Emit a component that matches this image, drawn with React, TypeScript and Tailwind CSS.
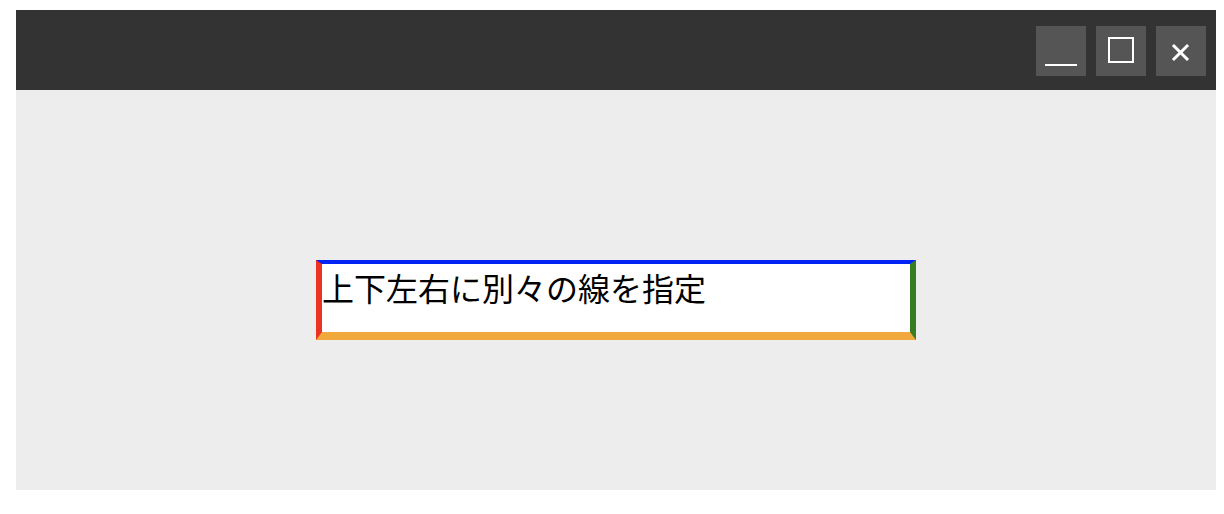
import React from 'react'

// Window title-bar buttons drawn as small SVG glyphs
function MinimizeIcon() {
  return (
    <svg width="50" height="50" viewBox="0 0 50 50">
      <rect x="9" y="38" width="32" height="2" fill="#ffffff" />
    </svg>
  )
}

function MaximizeIcon() {
  return (
    <svg width="50" height="50" viewBox="0 0 50 50">
      <rect x="13" y="12" width="24" height="24" fill="none" stroke="#ffffff" strokeWidth="2" />
    </svg>
  )
}

function CloseIcon() {
  return (
    <svg width="50" height="50" viewBox="0 0 50 50">
      <path d="M18 20 L31 33 M31 20 L18 33" stroke="#ffffff" strokeWidth="3" strokeLinecap="square" />
    </svg>
  )
}

export default function App() {
  return (
    <div className="min-h-[514px] bg-white pt-[10px] pl-4" style={{ fontFamily: '"Noto Sans CJK JP", "Noto Sans", sans-serif' }}>
      <div className="w-[1200px]">
        {/* title bar */}
        <div className="h-20 bg-[#333333] flex items-start justify-end gap-[10px] pt-4 pr-[10px]">
          <div className="w-[50px] h-[50px] bg-[#555555]">
            <MinimizeIcon />
          </div>
          <div className="w-[50px] h-[50px] bg-[#555555]">
            <MaximizeIcon />
          </div>
          <div className="w-[50px] h-[50px] bg-[#555555]">
            <CloseIcon />
          </div>
        </div>

        {/* content */}
        <div className="h-[400px] bg-[#ededed] flex justify-center pt-[170px]">
          <div className="w-[600px] h-20 bg-white border-t-4 border-l-[6px] border-r-[6px] border-b-8 border-t-[#0023f5] border-l-[#ea3323] border-r-[#377e22] border-b-[#f2a93b]">
            <p className="text-[32px] text-black leading-[46px]">上下左右に別々の線を指定</p>
          </div>
        </div>
      </div>
    </div>
  )
}
